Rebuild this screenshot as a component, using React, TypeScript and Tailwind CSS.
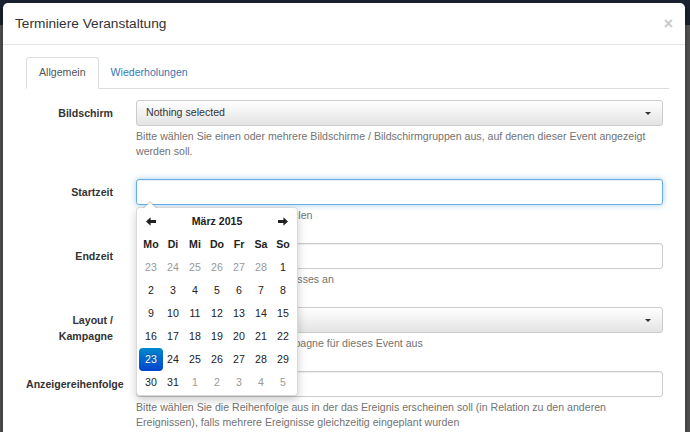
import React from "react";

const weeks: { d: number; muted?: boolean; active?: boolean }[][] = [
  [23, 24, 25, 26, 27, 28].map((d) => ({ d, muted: true })).concat([{ d: 1 }]),
  [2, 3, 4, 5, 6, 7, 8].map((d) => ({ d })),
  [9, 10, 11, 12, 13, 14, 15].map((d) => ({ d })),
  [16, 17, 18, 19, 20, 21, 22].map((d) => ({ d })),
  [{ d: 23, active: true }].concat([24, 25, 26, 27, 28, 29].map((d) => ({ d }))),
  [{ d: 30 }, { d: 31 }].concat([1, 2, 3, 4, 5].map((d) => ({ d, muted: true }))),
];

const weekdays = ["Mo", "Di", "Mi", "Do", "Fr", "Sa", "So"];

function Arrow({ dir }: { dir: "left" | "right" }) {
  return (
    <svg width="10" height="9" viewBox="0 0 10 9" className={dir === "right" ? "rotate-180" : ""}>
      <path d="M0 4.5 L4.6 0.3 L4.6 3.1 L10 3.1 L10 5.9 L4.6 5.9 L4.6 8.7 Z" fill="#222" />
    </svg>
  );
}

function Caret() {
  return <span className="inline-block h-0 w-0 border-x-[3px] border-t-[3px] border-x-transparent border-t-[#333]" />;
}

function DatePicker() {
  return (
    <div className="absolute left-0 top-[28px] z-10 w-[162px] rounded-[4px] border border-black/15 bg-white px-[3px] pb-[1px] pt-[2px] shadow-[0_4px_10px_rgba(0,0,0,0.2)]">
      <span className="absolute -top-[7px] left-[6px] h-0 w-0 border-x-[7px] border-b-[7px] border-x-transparent border-b-black/20" />
      <span className="absolute -top-[6px] left-[7px] h-0 w-0 border-x-[6px] border-b-[6px] border-x-transparent border-b-white" />
      <div className="grid grid-cols-7 text-[10.6px] text-[#222]">
        <div className="flex h-[23px] items-center justify-center">
          <Arrow dir="left" />
        </div>
        <div className="col-span-5 flex h-[23px] items-center justify-center font-bold">März 2015</div>
        <div className="flex h-[23px] items-center justify-center">
          <Arrow dir="right" />
        </div>
        {weekdays.map((w) => (
          <div key={w} className="flex h-[23px] items-center justify-center font-bold">
            {w}
          </div>
        ))}
        {weeks.flat().map((c, i) => (
          <div
            key={i}
            className={
              c.active
                ? "-mx-px flex h-[23px] items-center justify-center rounded-[4px] bg-[linear-gradient(to_bottom,#0088cc,#0044cc)] text-white [text-shadow:0_-1px_0_rgba(0,0,0,0.25)]"
                : c.muted
                ? "flex h-[23px] items-center justify-center text-[#999]"
                : "flex h-[23px] items-center justify-center"
            }
          >
            {c.d}
          </div>
        ))}
      </div>
    </div>
  );
}

function Row({
  label,
  help,
  children,
  relative,
}: {
  label: React.ReactNode;
  help: React.ReactNode;
  children: React.ReactNode;
  relative?: boolean;
}) {
  return (
    <div className="mb-[12px] flex">
      <label className="w-[87px] shrink-0 pt-[5px] text-right text-[10.6px] font-bold leading-[16px] text-[#333]">
        {label}
      </label>
      <div className={"ml-[23px] w-[527px]" + (relative ? " relative" : "")}>
        {children}
        <p className="mb-[8px] mt-[3px] text-[10.6px] leading-[15px] text-[#737373]">{help}</p>
      </div>
    </div>
  );
}

export default function App() {
  return (
    <div
      className="h-[432px] w-[690px] overflow-hidden bg-[linear-gradient(to_bottom,#1c2331_0,#1c2331_25px,#575757_25px)] pl-[3px] pt-[3px]"
      style={{ fontFamily: '"Liberation Sans", Arial, sans-serif' }}
    >
      <div className="h-[460px] w-[682px] rounded-[5px] bg-white shadow-[0_3px_9px_rgba(0,0,0,0.5)]">
        <div className="flex h-[42px] items-center justify-between border-b border-[#e5e5e5] pl-[12px] pr-[12px]">
          <h4 className="text-[13.7px] leading-[20px] text-[#333]">Terminiere Veranstaltung</h4>
          <span className="text-[16px] font-bold leading-none text-[#c8c8c8]">×</span>
        </div>

        <div className="pl-[23px] pr-[16px] pt-[12px]">
          <div className="flex h-[32px] border-b border-[#ddd] text-[10.6px]">
            <div className="-mb-px flex items-center rounded-t-[3px] border border-[#ddd] border-b-white bg-white px-[12px] text-[#555]">
              Allgemein
            </div>
            <div className="flex items-center px-[12px] text-[#337ab7]">Wiederholungen</div>
          </div>

          <div className="pt-[11px]">
            <Row
              label="Bildschirm"
              help="Bitte wählen Sie einen oder mehrere Bildschirme / Bildschirmgruppen aus, auf denen dieser Event angezeigt werden soll."
            >
              <div className="flex h-[26px] items-center justify-between rounded-[3px] border border-[#ccc] bg-[linear-gradient(to_bottom,#ffffff,#e3e3e3)] pl-[9px] pr-[11px] text-[10.6px] text-[#333]">
                <span>Nothing selected</span>
                <Caret />
              </div>
            </Row>

            <Row label="Startzeit" help="Bitte die Startzeit des Termins wählen" relative>
              <div className="h-[26px] rounded-[3px] border border-[#66afe9] bg-white shadow-[inset_0_1px_1px_rgba(0,0,0,0.075),0_0_6px_rgba(102,175,233,0.6)]" />
              <DatePicker />
            </Row>

            <Row label="Endzeit" help="Geben Sie die Endzeit des Ereignisses an">
              <div className="h-[26px] rounded-[3px] border border-[#ccc] bg-white shadow-[inset_0_1px_1px_rgba(0,0,0,0.075)]" />
            </Row>

            <Row
              label={
                <>
                  Layout /<br />
                  Kampagne
                </>
              }
              help="Bitte wählen Sie ein Layout / Kampagne für dieses Event aus"
            >
              <div className="flex h-[26px] items-center justify-end rounded-[3px] border border-[#ccc] bg-[linear-gradient(to_bottom,#ffffff,#e3e3e3)] pr-[11px]">
                <Caret />
              </div>
            </Row>

            <Row
              label="Anzeigereihenfolge"
              help="Bitte wählen Sie die Reihenfolge aus in der das Ereignis erscheinen soll (in Relation zu den anderen Ereignissen), falls mehrere Ereignisse gleichzeitig eingeplant wurden"
            >
              <div className="h-[26px] rounded-[3px] border border-[#ccc] bg-white shadow-[inset_0_1px_1px_rgba(0,0,0,0.075)]" />
            </Row>
          </div>
        </div>
      </div>
    </div>
  );
}
